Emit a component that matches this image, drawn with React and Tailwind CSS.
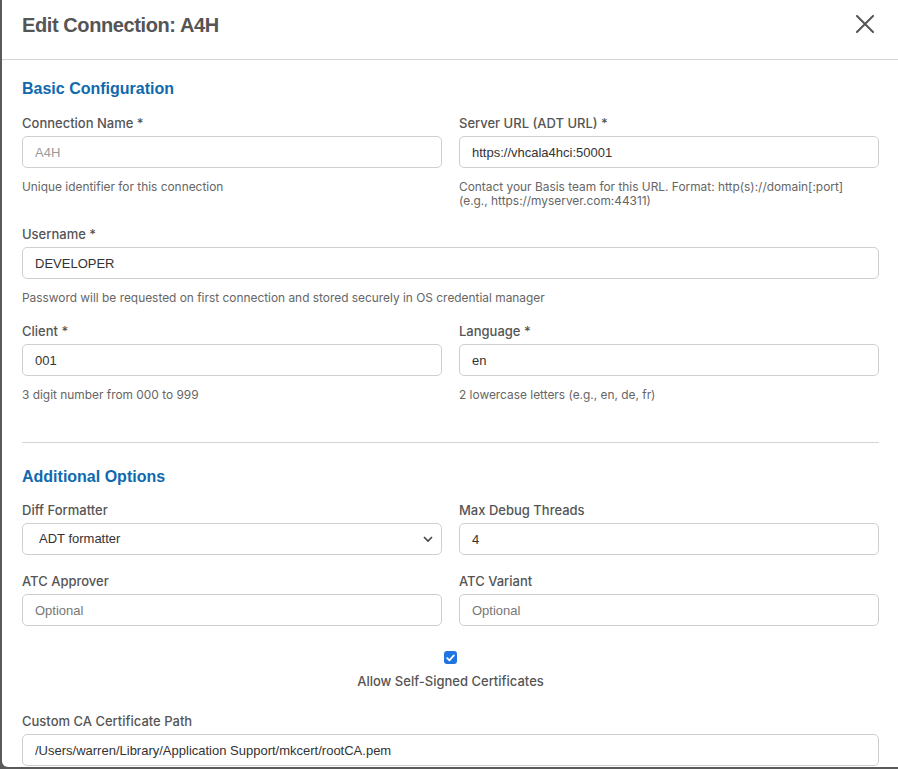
import { useState } from 'react';

function Label({ children }) {
  return (
    <label className="block text-[13px] leading-4 font-medium text-[#555] mb-[5px]" style={{ fontFamily: 'Inter, sans-serif' }}>
      {children}
    </label>
  );
}

function Help({ children }) {
  return (
    <p className="mt-[12px] pr-[20px] text-[11.9px] leading-[14px] text-[#666]" style={{ fontFamily: 'Inter, sans-serif' }}>
      {children}
    </p>
  );
}

function Field({ label, value, placeholder, disabled, help }) {
  return (
    <div>
      <Label>{label}</Label>
      <input
        defaultValue={value}
        placeholder={placeholder}
        disabled={disabled}
        className="block w-full h-[32px] px-3 border border-[#cfcfcf] rounded-[5px] bg-white text-[13px] text-[#333] placeholder:text-[#777] disabled:text-[#9a9a9a] outline-none"
      />
      {help && <Help>{help}</Help>}
    </div>
  );
}

export default function App() {
  const [allowSelfSigned, setAllowSelfSigned] = useState(true);

  return (
    <div className="h-[769px] bg-[#5a5a5a] pl-[2px] overflow-hidden" style={{ fontFamily: '"Liberation Sans", Arial, sans-serif' }}>
      <div className="h-[767px] bg-white rounded-bl-[6px] overflow-hidden">
        <div className="h-[60px] pl-[20px] pr-[24px] pt-[11px] flex items-start justify-between border-b border-[#d4d4d4]">
          <h1 className="text-[20px] leading-[28px] font-bold tracking-[-0.4px] text-[#555]">Edit Connection: A4H</h1>
          <button className="mt-[4px] text-[#555]">
            <svg width="18" height="18" viewBox="0 0 18 18" fill="none" stroke="currentColor" strokeWidth="2" strokeLinecap="square">
              <path d="M1 1L17 17M17 1L1 17" />
            </svg>
          </button>
        </div>

        <div className="pl-[20px] pr-[19px] pt-[19px]">
          <h2 className="text-[16px] leading-5 font-bold text-[#0f69ae] mb-[16px]">Basic Configuration</h2>

          <div className="grid grid-cols-2 gap-x-[17px] gap-y-[18px]">
            <Field label="Connection Name *" value="A4H" disabled help="Unique identifier for this connection" />
            <Field
              label="Server URL (ADT URL) *"
              value="https://vhcala4hci:50001"
              help="Contact your Basis team for this URL. Format: http(s)://domain[:port] (e.g., https://myserver.com:44311)"
            />
            <div className="col-span-2">
              <Field
                label="Username *"
                value="DEVELOPER"
                help="Password will be requested on first connection and stored securely in OS credential manager"
              />
            </div>
            <Field label="Client *" value="001" help="3 digit number from 000 to 999" />
            <Field label="Language *" value="en" help="2 lowercase letters (e.g., en, de, fr)" />
          </div>

          <div className="mt-[40px] border-t border-[#d4d4d4]" />

          <h2 className="mt-[24px] text-[16px] leading-5 font-bold text-[#0f69ae] mb-[15px]">Additional Options</h2>

          <div className="grid grid-cols-2 gap-x-[17px] gap-y-[18px]">
            <div>
              <Label>Diff Formatter</Label>
              <div className="relative">
                <select className="block w-full h-[32px] pl-4 pr-8 border border-[#cfcfcf] rounded-[5px] bg-white text-[13px] text-[#333] appearance-none outline-none">
                  <option>ADT formatter</option>
                  <option>Simple</option>
                </select>
                <svg className="absolute right-[9px] top-[13px] pointer-events-none text-[#444]" width="10" height="7" viewBox="0 0 10 7" fill="none" stroke="currentColor" strokeWidth="1.6">
                  <path d="M1 1L5 5L9 1" />
                </svg>
              </div>
            </div>
            <Field label="Max Debug Threads" value="4" />
            <Field label="ATC Approver" placeholder="Optional" />
            <Field label="ATC Variant" placeholder="Optional" />
          </div>

          <div className="mt-[25px] flex flex-col items-center">
            <button
              onClick={() => setAllowSelfSigned(!allowSelfSigned)}
              className={`w-[13px] h-[13px] rounded-[3px] flex items-center justify-center ${allowSelfSigned ? 'bg-[#1f74e0]' : 'bg-white border border-[#888]'}`}
            >
              {allowSelfSigned && (
                <svg width="9" height="8" viewBox="0 0 9 8" fill="none" stroke="white" strokeWidth="1.8" strokeLinecap="round" strokeLinejoin="round">
                  <path d="M1.2 4.2L3.4 6.4L7.8 1.4" />
                </svg>
              )}
            </button>
            <span className="mt-[9px] text-[13px] leading-4 font-medium text-[#555]" style={{ fontFamily: 'Inter, sans-serif' }}>
              Allow Self-Signed Certificates
            </span>
          </div>

          <div className="mt-[24px]">
            <Field label="Custom CA Certificate Path" value="/Users/warren/Library/Application Support/mkcert/rootCA.pem" />
          </div>
        </div>
      </div>
    </div>
  );
}
